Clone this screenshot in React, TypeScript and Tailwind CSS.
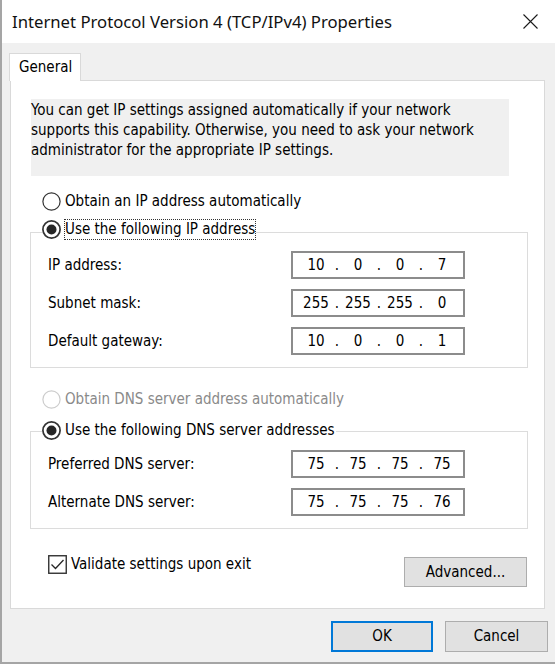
import React, { Fragment } from "react";

const F = "font-['DejaVu_Sans_Condensed','DejaVu_Sans',sans-serif] [font-stretch:condensed] text-[15px] text-black";

function Radio({ checked, disabled }: { checked?: boolean; disabled?: boolean }) {
  const c = disabled ? "#cccccc" : "#333333";
  return (
    <svg width="19" height="19" viewBox="0 0 19 19" className="shrink-0">
      <circle cx="9.5" cy="9.5" r="8.6" fill="#ffffff" stroke={c} strokeWidth={checked ? 1.7 : 1.2} />
      {checked && <circle cx="9.5" cy="9.5" r="5" fill="#262626" />}
    </svg>
  );
}

function RadioLabel({
  text,
  checked,
  disabled,
  focus,
}: {
  text: string;
  checked?: boolean;
  disabled?: boolean;
  focus?: boolean;
}) {
  return (
    <div className="flex items-center gap-[3px]">
      <Radio checked={checked} disabled={disabled} />
      <span
        className={
          "leading-[19px] border " +
          (focus ? "border-dotted border-[#333333]" : "border-transparent") +
          (disabled ? " text-[#8a8a8a]" : "")
        }
      >
        {text}
      </span>
    </div>
  );
}

function IpBox({ parts }: { parts: string[] }) {
  return (
    <div className="w-[174px] h-[28px] border-2 border-[#8c8c8c] bg-white flex items-center pl-[6px] leading-none">
      {parts.map((p, i) => (
        <Fragment key={i}>
          {i > 0 && <span className="w-[8px] text-center">.</span>}
          <span className="w-[34px] text-center">{p}</span>
        </Fragment>
      ))}
    </div>
  );
}

function Row({ label, parts }: { label: string; parts: string[] }) {
  return (
    <div className="flex items-center h-[28px]">
      <span className="w-[243px]">{label}</span>
      <IpBox parts={parts} />
    </div>
  );
}

export default function App() {
  return (
    <div className={"w-[555px] h-[665px] bg-white " + F}>
      <div className="h-[664px] flex flex-col border-l-2 border-b-2 border-[#a5a5a5]">
        {/* Title bar */}
        <div className="h-[43px] shrink-0 bg-white flex items-center justify-between pl-[10px] pr-[17px]">
          <span className="font-['Noto_Sans',sans-serif] [font-stretch:normal] text-[16.7px] text-[#111111]">
            Internet Protocol Version 4 (TCP/IPv4) Properties
          </span>
          <svg width="15" height="15" viewBox="0 0 15 15">
            <path d="M0.5 0.5 L14.5 14.5 M14.5 0.5 L0.5 14.5" stroke="#1a1a1a" strokeWidth="1.1" fill="none" />
          </svg>
        </div>

        {/* Body */}
        <div className="flex-1 bg-[#f0f0f0] pt-[10px] pl-[7px] pr-[7px] flex flex-col">
          {/* Tab */}
          <div className="relative z-10 -mb-px w-[72px] h-[28px] bg-white border border-b-0 border-[#d9d9d9] flex items-center pl-[9px]">
            General
          </div>

          {/* Panel */}
          <div className="ml-[1px] w-[535px] h-[529px] bg-white border border-[#d9d9d9] pt-[18px]">
            <div className="ml-[20px] w-[478px] h-[77px] bg-[#f0f0f0] leading-[20px] pt-[1px] whitespace-nowrap">
              You can get IP settings assigned automatically if your network
              <br />
              supports this capability. Otherwise, you need to ask your network
              <br />
              administrator for the appropriate IP settings.
            </div>

            <div className="mt-[15px] ml-[31px] h-[20px] flex items-center">
              <RadioLabel text="Obtain an IP address automatically" />
            </div>

            <fieldset className="mt-[8px] ml-[19px] w-[498px] border border-[#dcdcdc] pb-[12px]">
              <legend className="ml-[11px] pb-[5px]">
                <RadioLabel text="Use the following IP address" checked focus />
              </legend>
              <div className="pt-[6px] pl-[17px] flex flex-col gap-[10px]">
                <Row label="IP address:" parts={["10", "0", "0", "7"]} />
                <Row label="Subnet mask:" parts={["255", "255", "255", "0"]} />
                <Row label="Default gateway:" parts={["10", "0", "0", "1"]} />
              </div>
            </fieldset>

            <div className="mt-[21px] ml-[31px] h-[20px] flex items-center">
              <RadioLabel text="Obtain DNS server address automatically" disabled />
            </div>

            <fieldset className="mt-[11px] ml-[19px] w-[498px] border border-[#dcdcdc] pb-[12px]">
              <legend className="ml-[11px] pb-[1px]">
                <RadioLabel text="Use the following DNS server addresses" checked />
              </legend>
              <div className="pt-[8px] pl-[17px] flex flex-col gap-[10px]">
                <Row label="Preferred DNS server:" parts={["75", "75", "75", "75"]} />
                <Row label="Alternate DNS server:" parts={["75", "75", "75", "76"]} />
              </div>
            </fieldset>

            <div className="mt-[26px] pl-[37px] pr-[17px] flex items-start justify-between">
              <div className="flex items-center gap-[4px] h-[19px]">
                <svg width="19" height="19" viewBox="0 0 19 19" className="shrink-0">
                  <rect x="0.75" y="0.75" width="17.5" height="17.5" fill="#ffffff" stroke="#333333" strokeWidth="1.4" />
                  <path d="M3.5 9.5 L7.5 13.5 L15.5 5" stroke="#262626" strokeWidth="1.3" fill="none" />
                </svg>
                <span>Validate settings upon exit</span>
              </div>
              <button className="mt-[2px] w-[123px] h-[30px] bg-[#e1e1e1] border border-[#adadad] flex items-center justify-center">
                Advanced...
              </button>
            </div>
          </div>

          {/* Dialog buttons */}
          <div className="mt-[12px] flex justify-end gap-[12px]">
            <button className="w-[102px] h-[31px] bg-[#e1e1e1] border-2 border-[#0078d7] flex items-center justify-center">
              OK
            </button>
            <button className="w-[103px] h-[31px] bg-[#e1e1e1] border border-[#adadad] flex items-center justify-center">
              Cancel
            </button>
          </div>
        </div>
      </div>
    </div>
  );
}
